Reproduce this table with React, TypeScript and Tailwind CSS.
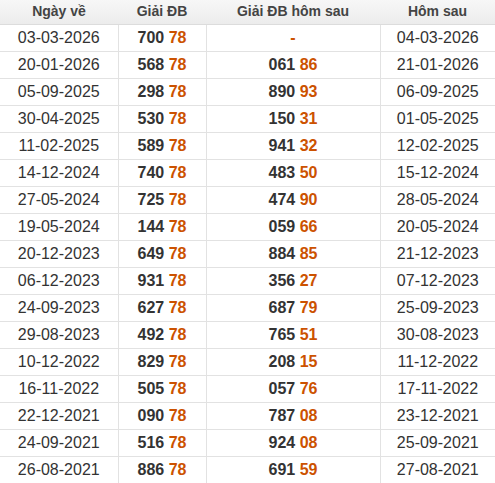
const rows: [string, string, string, string, string, string][] = [
  ["03-03-2026", "700", "78", "", "-", "04-03-2026"],
  ["20-01-2026", "568", "78", "061", "86", "21-01-2026"],
  ["05-09-2025", "298", "78", "890", "93", "06-09-2025"],
  ["30-04-2025", "530", "78", "150", "31", "01-05-2025"],
  ["11-02-2025", "589", "78", "941", "32", "12-02-2025"],
  ["14-12-2024", "740", "78", "483", "50", "15-12-2024"],
  ["27-05-2024", "725", "78", "474", "90", "28-05-2024"],
  ["19-05-2024", "144", "78", "059", "66", "20-05-2024"],
  ["20-12-2023", "649", "78", "884", "85", "21-12-2023"],
  ["06-12-2023", "931", "78", "356", "27", "07-12-2023"],
  ["24-09-2023", "627", "78", "687", "79", "25-09-2023"],
  ["29-08-2023", "492", "78", "765", "51", "30-08-2023"],
  ["10-12-2022", "829", "78", "208", "15", "11-12-2022"],
  ["16-11-2022", "505", "78", "057", "76", "17-11-2022"],
  ["22-12-2021", "090", "78", "787", "08", "23-12-2021"],
  ["24-09-2021", "516", "78", "924", "08", "25-09-2021"],
  ["26-08-2021", "886", "78", "691", "59", "27-08-2021"],
];

export default function App() {
  return (
    <div className="w-[495px] bg-white font-['Liberation_Sans',Arial,sans-serif]">
      <table className="w-[495px] table-fixed border-collapse">
        <colgroup>
          <col className="w-[118px]" />
          <col className="w-[88px]" />
          <col className="w-[174px]" />
          <col className="w-[115px]" />
        </colgroup>
        <thead>
          <tr className="h-[24px] bg-gradient-to-b from-[#f7f7f7] to-[#ececec] text-[14px] font-bold text-[#444]">
            <th className="border-b border-[#dcdcdc] text-center">Ngày về</th>
            <th className="border-b border-[#dcdcdc] text-center">Giải ĐB</th>
            <th className="border-b border-[#dcdcdc] text-center">Giải ĐB hôm sau</th>
            <th className="border-b border-[#dcdcdc] text-center">Hôm sau</th>
          </tr>
        </thead>
        <tbody>
          {rows.map((r) => (
            <tr key={r[0]} className="h-[27px] text-[16px] text-[#333]">
              <td className="border-r border-b border-[#e2e2e2] text-center">{r[0]}</td>
              <td className="border-r border-b border-[#e2e2e2] text-center font-bold">
                {r[1]} <span className="text-[#cc5200]">{r[2]}</span>
              </td>
              <td className="border-r border-b border-[#e2e2e2] text-center font-bold">
                {r[3] ? (
                  <>
                    {r[3]} <span className="text-[#cc5200]">{r[4]}</span>
                  </>
                ) : (
                  <span className="text-[#cc5200]">{r[4]}</span>
                )}
              </td>
              <td className="border-b border-[#e2e2e2] text-center">{r[5]}</td>
            </tr>
          ))}
        </tbody>
      </table>
    </div>
  );
}
